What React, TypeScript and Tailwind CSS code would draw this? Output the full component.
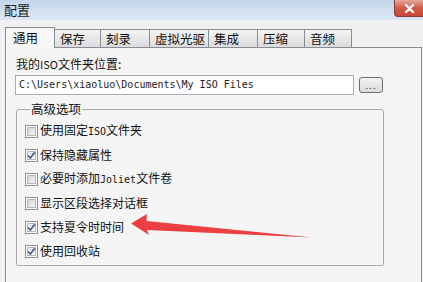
const tabs = [
  { label: "通用", w: "w-[50px]", active: true },
  { label: "保存", w: "w-[47px]" },
  { label: "刻录", w: "w-[50px]" },
  { label: "虚拟光驱", w: "w-[60px]" },
  { label: "集成", w: "w-[50px]" },
  { label: "压缩", w: "w-[48px]" },
  { label: "音频", w: "w-[48px]" },
];

const mono = "font-['DejaVu_Sans_Mono',monospace] text-[10px]";

function Checkbox({ checked }: { checked: boolean }) {
  return (
    <span className="w-[13px] h-[13px] shrink-0 border border-[#8e8f8f] bg-white p-px flex">
      <span
        className={`relative flex-1 border border-[#b4b8bd] ${
          checked
            ? "bg-gradient-to-br from-[#e4e6ea] to-[#fbfbfb]"
            : "bg-gradient-to-br from-[#cfd2d6] to-[#f7f7f7]"
        }`}
      >
        {checked && (
          <svg viewBox="0 0 9 9" className="absolute -left-px -top-px w-[9px] h-[9px]">
            <path d="M1.2 4.6 L3.4 7 L7.8 1.4" fill="none" stroke="#4a5f97" strokeWidth="1.7" />
          </svg>
        )}
      </span>
    </span>
  );
}

const options: { text: React.ReactNode; checked: boolean }[] = [
  { text: <>使用固定<span className={mono}>ISO</span>文件夹</>, checked: false },
  { text: <>保持隐藏属性</>, checked: true },
  { text: <>必要时添加<span className={mono}>Joliet</span>文件卷</>, checked: false },
  { text: <>显示区段选择对话框</>, checked: false },
  { text: <>支持夏令时时间</>, checked: true },
  { text: <>使用回收站</>, checked: true },
];

export default function App() {
  return (
    <div className="relative w-[423px] h-[282px] overflow-hidden bg-[#f0f0f0] text-[12px] text-[#111] font-['Noto_Sans_CJK_SC',sans-serif]">
      {/* title bar */}
      <div className="h-[20px] flex items-start justify-between bg-gradient-to-b from-[#c3d6ec] to-[#dbe7f4]">
        <span className="pl-[4px] leading-[19px] text-[13px] text-[#1b1b1b]">配置</span>
        <div className="w-[29px] h-[17px] rounded-bl-[4px] border border-t-0 border-r-0 border-[#8a3b33] bg-gradient-to-b from-[#e4a89d] via-[#cf5a47] to-[#c7473a] flex items-center justify-center">
          <svg viewBox="0 0 10 9" className="w-[11px] h-[9px]">
            <path d="M1.5 1 L8.5 8 M8.5 1 L1.5 8" stroke="#fff" strokeWidth="2.2" strokeLinecap="round" />
          </svg>
        </div>
      </div>

      {/* tabs */}
      <div className="pl-[5px] pt-[7px] flex items-end relative z-10">
        {tabs.map((t) =>
          t.active ? (
            <div
              key={t.label}
              className={`${t.w} h-[21px] -mb-px border border-b-0 border-[#898c95] bg-[#f6f6f6] pl-[7px] leading-[19px] text-[12.5px]`}
            >
              {t.label}
            </div>
          ) : (
            <div
              key={t.label}
              className={`${t.w} -ml-px h-[18px] border border-b-0 border-[#898c95] bg-gradient-to-b from-[#f4f4f4] to-[#dcdcdc] pl-[5px] leading-[18px] text-[12.5px] whitespace-nowrap`}
            >
              {t.label}
            </div>
          )
        )}
      </div>

      {/* panel */}
      <div className="ml-[5px] mr-px h-[300px] border border-[#898c95] bg-[#f5f5f5] pl-[10px] pt-[8px]">
        <div className="leading-[16px] flex items-center">
          我的<span className="text-[11px]">ISO</span>文件夹位置:
        </div>
        <div className="mt-[3px] flex items-start">
          <div className={`w-[339px] h-[20px] -ml-px border border-[#abadb3] border-t-[#a3a5ab] bg-white pl-[3px] leading-[18px] ${mono} text-[#222]`}>
            C:\Users\xiaoluo\Documents\My ISO Files
          </div>
          <button className="ml-[5px] mt-[2px] w-[24px] h-[16px] rounded-[3px] border border-[#707070] bg-gradient-to-b from-[#f2f2f2] to-[#dcdcdc] text-[10px] leading-[10px] text-[#333] tracking-[1px]">
            ...
          </button>
        </div>

        <fieldset className="mt-[6px] w-[368px] h-[165px] border border-[#a9a9a9] rounded-[3px] pl-[8px]">
          <legend className="ml-[5px] px-px leading-[16px] text-[12.5px]">高级选项</legend>
          <div className="flex flex-col pt-[2px]">
            {options.map((o, i) => (
              <div key={i} className="h-[24px] flex items-center gap-[2px]">
                <Checkbox checked={o.checked} />
                <span className="text-[12px] leading-[16px]">{o.text}</span>
              </div>
            ))}
          </div>
        </fieldset>
      </div>

      {/* annotation arrow */}
      <svg className="absolute inset-0 pointer-events-none" width="423" height="282" viewBox="0 0 423 282">
        <polygon
          points="131,223.5 147,214 146.5,221 312,237.5 147,230 149,235"
          fill="#ec3f41"
        />
      </svg>
    </div>
  );
}
